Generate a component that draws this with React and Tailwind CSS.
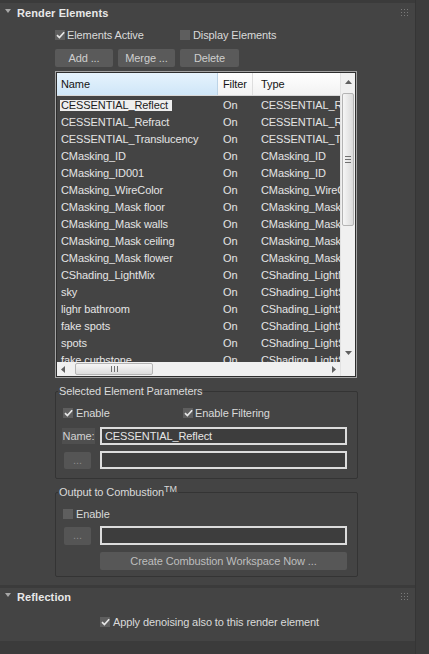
import React from 'react';

const rows = [
  ['CESSENTIAL_Reflect', 'CESSENTIAL_Reflect'],
  ['CESSENTIAL_Refract', 'CESSENTIAL_Refract'],
  ['CESSENTIAL_Translucency', 'CESSENTIAL_Translucency'],
  ['CMasking_ID', 'CMasking_ID'],
  ['CMasking_ID001', 'CMasking_ID'],
  ['CMasking_WireColor', 'CMasking_WireColor'],
  ['CMasking_Mask floor', 'CMasking_Mask'],
  ['CMasking_Mask walls', 'CMasking_Mask'],
  ['CMasking_Mask ceiling', 'CMasking_Mask'],
  ['CMasking_Mask flower', 'CMasking_Mask'],
  ['CShading_LightMix', 'CShading_LightMix'],
  ['sky', 'CShading_LightSelect'],
  ['lighr bathroom', 'CShading_LightSelect'],
  ['fake spots', 'CShading_LightSelect'],
  ['spots', 'CShading_LightSelect'],
  ['fake curbstone', 'CShading_LightSelect'],
];

function Check({ checked }) {
  return (
    <span className="w-[10px] h-[10px] bg-[#5e5e5e] flex items-center justify-center shrink-0">
      {checked && (
        <svg width="9" height="8" viewBox="0 0 9 8">
          <path d="M1 4.2 L3.4 6.6 L8.2 1.2" stroke="#e6e6e6" strokeWidth="1.7" fill="none" />
        </svg>
      )}
    </span>
  );
}

function Grip() {
  return (
    <svg width="7" height="7" viewBox="0 0 7 7">
      {[0, 3, 6].map((y) =>
        [0, 3, 6].map((x) => <rect key={`${x}-${y}`} x={x} y={y} width="1" height="1" fill="#7a7a7a" />)
      )}
    </svg>
  );
}

function RollHeader({ title }) {
  return (
    <div className="flex items-center pl-[5px] pr-[7px] h-full">
      <svg width="6" height="5" viewBox="0 0 6 5" className="mb-[3px]">
        <path d="M0 0 L6 0 L3 4 Z" fill="#a8a8a8" />
      </svg>
      <span className="ml-[6px] font-bold text-[#e8e8e8] tracking-[0.1px]">{title}</span>
      <span className="ml-auto mb-[2px]">
        <Grip />
      </span>
    </div>
  );
}

function Input({ value, h }) {
  return (
    <div className={`w-[247px] ${h} border-2 border-[#dcdcdc] bg-[#3d3d3d] flex items-center pl-[3px] text-[#e6e6e6]`}>
      {value}
    </div>
  );
}

function Arrow({ dir }) {
  const d = {
    up: 'M0 4 L7 4 L3.5 0 Z',
    down: 'M0 0 L7 0 L3.5 4 Z',
    left: 'M4 0 L4 7 L0 3.5 Z',
    right: 'M0 0 L0 7 L4 3.5 Z',
  }[dir];
  const vertical = dir === 'up' || dir === 'down';
  return (
    <svg width={vertical ? 7 : 4} height={vertical ? 4 : 7} viewBox={vertical ? '0 0 7 4' : '0 0 4 7'}>
      <path d={d} fill="#606060" />
    </svg>
  );
}

export default function App() {
  return (
    <div className="w-[429px] h-[654px] bg-[#3b3b3b] flex overflow-hidden text-[11px] leading-none tracking-[-0.1px] text-[#dadada] font-['Liberation_Sans',Arial,sans-serif]">
      <div className="w-[415px] flex flex-col pt-[3px]">
        {/* Render Elements rollout */}
        <div className="h-[582px] bg-[#444444] flex flex-col">
          <div className="h-[20px]">
            <RollHeader title="Render Elements" />
          </div>

          <div className="mt-[4px] h-[16px] flex items-center pl-[55px]">
            <label className="w-[125px] flex items-center gap-[2px]">
              <Check checked />
              <span>Elements Active</span>
            </label>
            <label className="flex items-center gap-[3px]">
              <Check />
              <span>Display Elements</span>
            </label>
          </div>

          <div className="mt-[6px] h-[18px] flex gap-[5px] pl-[55px]">
            <button className="w-[58px] h-full bg-[#5a5a5a] rounded-[2px] text-[#cfcfcf]">Add ...</button>
            <button className="w-[57px] h-full bg-[#5a5a5a] rounded-[2px] text-[#cfcfcf]">Merge ...</button>
            <button className="w-[59px] h-full bg-[#5a5a5a] rounded-[2px] text-[#cfcfcf]">Delete</button>
          </div>

          {/* list */}
          <div className="mt-[4px] ml-[55px] w-[302px] h-[307px] border border-[#a3a3a3] p-[1px] bg-[#2e2e2e] flex">
            <div className="w-[283px] flex flex-col">
              <div className="h-[23px] flex text-[#141414] border-b border-[#d8d8d8]">
                <div className="w-[161px] pl-[4px] pt-[1px] flex items-center bg-gradient-to-b from-[#e6f3fd] to-[#cfe6f8] border-r border-[#bcd3e6]">
                  Name
                </div>
                <div className="w-[35px] pl-[5px] pt-[1px] flex items-center bg-gradient-to-b from-[#ffffff] to-[#f2f2f2] border-r border-[#dedede]">
                  Filter
                </div>
                <div className="flex-1 pl-[8px] pt-[1px] flex items-center bg-gradient-to-b from-[#ffffff] to-[#f2f2f2]">
                  Type
                </div>
              </div>
              <div className="h-[266px] pt-[1px] overflow-hidden bg-[#444444] text-[#e4e4e4]">
                {rows.map(([name, type], i) => (
                  <div key={i} className="h-[17px] flex items-center whitespace-nowrap">
                    <div className="w-[161px] pl-[3px] overflow-hidden">
                      {i === 0 ? (
                        <span className="bg-[#eeeeee] text-[#1c1c1c] pl-[1px] pr-[4px] py-[3px]">{name}</span>
                      ) : (
                        <span className="pl-[1px]">{name}</span>
                      )}
                    </div>
                    <div className="w-[35px] pl-[5px]">On</div>
                    <div className="flex-1 pl-[8px] overflow-hidden">{type}</div>
                  </div>
                ))}
              </div>
              <div className="h-[14px] bg-[#f0f0f0] flex items-center">
                <span className="ml-[4px] flex">
                  <Arrow dir="left" />
                </span>
                <div className="ml-[10px] w-[78px] h-[12px] rounded-[2px] border border-[#b4b4b4] bg-gradient-to-b from-[#f6f6f6] to-[#dcdcdc] flex items-center justify-center gap-[2px]">
                  <span className="w-[1px] h-[6px] bg-[#707070]" />
                  <span className="w-[1px] h-[6px] bg-[#707070]" />
                  <span className="w-[1px] h-[6px] bg-[#707070]" />
                </div>
                <span className="ml-auto mr-[4px] flex">
                  <Arrow dir="right" />
                </span>
              </div>
            </div>
            <div className="flex-1 flex flex-col bg-[#f0f0f0] border-l border-[#e2e2e2]">
              <div className="h-[289px] flex flex-col items-center">
                <span className="mt-[7px] flex">
                  <Arrow dir="up" />
                </span>
                <div className="mt-[9px] w-[12px] h-[133px] rounded-[2px] border border-[#b4b4b4] bg-gradient-to-r from-[#f6f6f6] to-[#dadada] flex flex-col items-center justify-center gap-[2px]">
                  <span className="w-[6px] h-[1px] bg-[#707070]" />
                  <span className="w-[6px] h-[1px] bg-[#707070]" />
                  <span className="w-[6px] h-[1px] bg-[#707070]" />
                </div>
                <span className="mt-auto mb-[7px] flex">
                  <Arrow dir="down" />
                </span>
              </div>
              <div className="flex-1 bg-[#f0f0f0]" />
            </div>
          </div>

          {/* Selected Element Parameters */}
          <div className="mt-[13px] ml-[55px] w-[303px] border border-[#343434] rounded-[2px] pb-[9px]">
            <div className="-mt-[8px] ml-[2px] w-fit bg-[#444444] px-[1px] h-[15px] flex items-center">
              Selected Element Parameters
            </div>
            <div className="mt-[6px] h-[16px] flex items-center pl-[7px]">
              <label className="w-[120px] flex items-center gap-[3px]">
                <Check checked />
                <span>Enable</span>
              </label>
              <label className="flex items-center gap-[2px]">
                <Check checked />
                <span>Enable Filtering</span>
              </label>
            </div>
            <div className="mt-[6px] h-[18px] flex items-center">
              <div className="ml-[6px] w-[33px] h-[16px] bg-[#4f4f4f] flex items-center justify-center text-[#d2d2d2]">
                Name:
              </div>
              <div className="ml-[5px]">
                <Input value="CESSENTIAL_Reflect" h="h-[18px]" />
              </div>
            </div>
            <div className="mt-[6px] h-[18px] flex items-center">
              <button className="ml-[8px] w-[27px] h-[17px] bg-[#555555] rounded-[2px] text-[#8c8c8c]">...</button>
              <div className="ml-[9px]">
                <Input value="" h="h-[18px]" />
              </div>
            </div>
          </div>

          {/* Output to Combustion */}
          <div className="mt-[13px] ml-[55px] w-[303px] border border-[#343434] rounded-[2px] pb-[6px]">
            <div className="-mt-[8px] ml-[2px] w-fit bg-[#444444] px-[1px] h-[15px] flex items-center">
              <span>Output to Combustion</span>
              <span className="text-[9px] self-start">TM</span>
            </div>
            <div className="mt-[6px] h-[16px] flex items-center pl-[7px]">
              <label className="flex items-center gap-[3px]">
                <Check />
                <span>Enable</span>
              </label>
            </div>
            <div className="mt-[4px] h-[19px] flex items-center">
              <button className="ml-[8px] w-[27px] h-[18px] bg-[#555555] rounded-[2px] text-[#8c8c8c]">...</button>
              <div className="ml-[9px]">
                <Input value="" h="h-[19px]" />
              </div>
            </div>
            <button className="mt-[7px] ml-[44px] w-[247px] h-[18px] bg-[#575757] rounded-[2px] text-[#bebebe] block">
              Create Combustion Workspace Now ...
            </button>
          </div>
        </div>

        {/* Reflection rollout */}
        <div className="mt-[3px] h-[53px] bg-[#444444] flex flex-col">
          <div className="h-[18px]">
            <RollHeader title="Reflection" />
          </div>
          <div className="mt-[8px] h-[16px] flex items-center pl-[100px]">
            <label className="flex items-center gap-[3px]">
              <Check checked />
              <span>Apply denoising also to this render element</span>
            </label>
          </div>
        </div>
      </div>
      <div className="flex-1 border-l border-[#353535] bg-[#3c3c3c]" />
    </div>
  );
}
